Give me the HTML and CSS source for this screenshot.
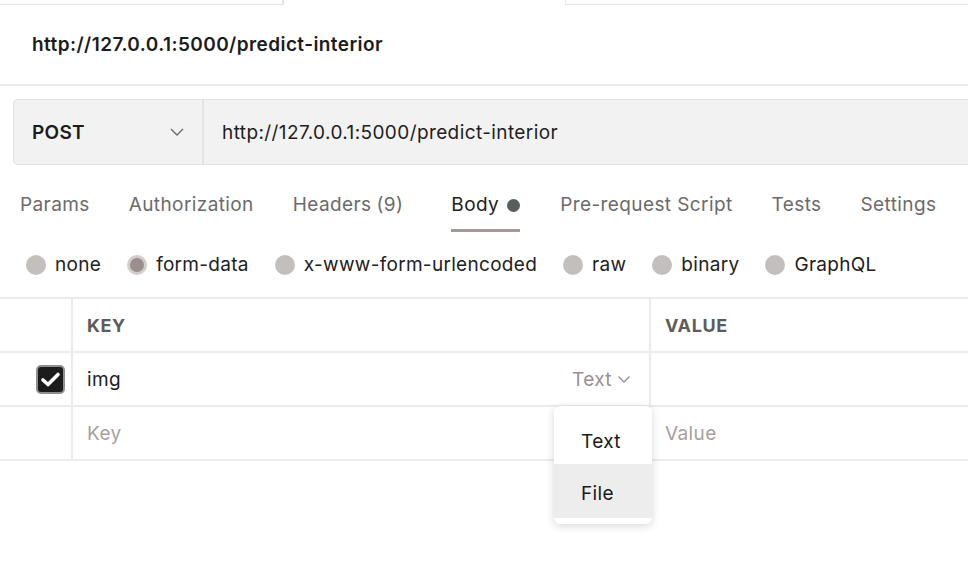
FILE: index.html
```html
<!DOCTYPE html>
<html>
<head>
<meta charset="utf-8">
<link rel="stylesheet" href="styles.css">
</head>
<body>
<div class="app">
  <div class="tabstrip">
    <div class="strip-left"></div>
    <div class="strip-active"></div>
    <div class="strip-right"></div>
  </div>
  <div class="title-bar">
    <span class="title">http://127.0.0.1:5000/predict-interior</span>
  </div>
  <div class="request-bar">
    <div class="method">
      <span class="method-name">POST</span>
      <svg class="chev" width="16" height="10" viewBox="0 0 16 10"><path d="M2 2 L8 8 L14 2" fill="none" stroke="#6b6b6b" stroke-width="1.4"/></svg>
    </div>
    <div class="url">http://127.0.0.1:5000/predict-interior</div>
  </div>
  <div class="tabs">
    <div class="tab">Params</div>
    <div class="tab">Authorization</div>
    <div class="tab headers">Headers <span class="count">(9)</span></div>
    <div class="tab active">Body <span class="dot"></span></div>
    <div class="tab">Pre-request Script</div>
    <div class="tab">Tests</div>
    <div class="tab">Settings</div>
  </div>
  <div class="radios">
    <label class="radio"><span class="circle"></span>none</label>
    <label class="radio"><span class="circle selected"></span>form-data</label>
    <label class="radio"><span class="circle"></span>x-www-form-urlencoded</label>
    <label class="radio"><span class="circle"></span>raw</label>
    <label class="radio"><span class="circle"></span>binary</label>
    <label class="radio"><span class="circle"></span>GraphQL</label>
  </div>
  <div class="table">
    <div class="row head">
      <div class="cell check"></div>
      <div class="cell key">KEY</div>
      <div class="cell value">VALUE</div>
    </div>
    <div class="row">
      <div class="cell check">
        <span class="checkbox"><svg width="21" height="17" viewBox="0 0 21 17"><path d="M3 9 L8 13.5 L18 3.5" fill="none" stroke="#fff" stroke-width="3.6" stroke-linecap="round" stroke-linejoin="round"/></svg></span>
      </div>
      <div class="cell key">
        <span class="key-text">img</span>
        <span class="type">Text <svg width="14" height="9" viewBox="0 0 14 9"><path d="M1.5 1.5 L7 7 L12.5 1.5" fill="none" stroke="#9a9090" stroke-width="1.3"/></svg></span>
      </div>
      <div class="cell value"></div>
    </div>
    <div class="row">
      <div class="cell check"></div>
      <div class="cell key"><span class="placeholder">Key</span></div>
      <div class="cell value"><span class="placeholder">Value</span></div>
      <div class="menu">
        <div class="menu-item first">Text</div>
        <div class="menu-item hover">File</div>
      </div>
    </div>
  </div>
</div>
</body>
</html>
```
FILE: styles.css
```css
* { box-sizing: border-box; }
html, body { margin: 0; padding: 0; background: #fff; }
body {
  font-family: Inter, "Noto Sans", "Liberation Sans", sans-serif;
  color: #212121;
  width: 968px;
  height: 565px;
  overflow: hidden;
  letter-spacing: 0.4px;
}
.tabstrip { display: flex; height: 5px; }
.strip-left { width: 284px; border-bottom: 1px solid #e4e4e4; border-right: 2px solid #e4e4e4; }
.strip-active { width: 281px; }
.strip-right { flex: 1; border-bottom: 1px solid #e4e4e4; border-left: 1px solid #ececec; }

.title-bar {
  height: 81px;
  display: flex;
  align-items: center;
  padding-left: 32px;
  border-bottom: 2px solid #ebebeb;
}
.title { font-size: 19px; font-weight: 600; color: #1c1c1c; letter-spacing: 0.42px; }

.request-bar {
  margin: 13px 0 0 13px;
  height: 66px;
  display: flex;
  background: #f2f2f2;
  border: 1px solid #e2e2e2;
  border-right: none;
  border-radius: 5px 0 0 5px;
}
.method {
  width: 190px;
  display: flex;
  align-items: center;
  justify-content: space-between;
  padding: 0 17px 0 18px;
  border-right: 2px solid #e4e4e4;
}
.method-name { font-size: 19px; font-weight: 600; color: #1c1c1c; letter-spacing: 0.3px; }
.url { display: flex; align-items: center; padding-left: 18px; font-size: 19px; color: #212121; }

.tabs {
  display: flex;
  padding: 28px 0 0 20px;
  height: 67px;
  white-space: nowrap;
  overflow: hidden;
}
.tab {
  font-size: 19px;
  color: #6b6b6b;
  line-height: 24px;
  margin-right: 39px;
  height: 39px;
  display: flex;
  align-items: flex-start;
  flex-shrink: 0;
}
.tab.headers { margin-right: 48px; }
.tab .count { margin-left: 5px; }
.tab.active { color: #212121; border-bottom: 3px solid #a29a96; margin-right: 40px; }
.dot { width: 13px; height: 13px; border-radius: 50%; background: #5a5e5a; margin: 6px 0 0 8px; display: inline-block; }

.radios {
  display: flex;
  align-items: center;
  padding: 0 0 0 26px;
  height: 65px;
  white-space: nowrap;
}
.radio {
  display: flex;
  align-items: center;
  font-size: 19px;
  color: #212121;
  margin-right: 26px;
  line-height: 24px;
  letter-spacing: 0.3px;
}
.circle {
  width: 20px;
  height: 20px;
  border-radius: 50%;
  background: #c3bfbd;
  margin-right: 9px;
  display: inline-block;
}
.circle.selected { background: #9a8f8c; border: 3px solid #d3cecc; }

.table { border-top: 2px solid #ebebeb; }
.row { display: flex; height: 54px; border-bottom: 2px solid #ebebeb; position: relative; }
.cell { display: flex; align-items: center; }
.cell.check { width: 73px; border-right: 2px solid #ebebeb; justify-content: flex-end; padding-right: 6px; }
.cell.key { width: 578px; border-right: 2px solid #ebebeb; padding-left: 14px; padding-right: 18px; font-size: 19px; }
.cell.value { flex: 1; padding-left: 14px; font-size: 19px; }
.head .cell.key, .head .cell.value { font-size: 18px; font-weight: 700; color: #5c5c5c; letter-spacing: 0.6px; }
.key-text { flex: 1; color: #1e1e1e; }
.type { color: #9a9090; display: flex; align-items: center; gap: 5px; }
.placeholder { color: #a8a0a0; }
.checkbox {
  width: 29px;
  height: 29px;
  border-radius: 5px;
  background: #1c1c1c;
  border: 2px solid #8f8f8f;
  display: flex;
  align-items: center;
  justify-content: center;
}

.menu {
  position: absolute;
  left: 554px;
  top: -1px;
  width: 98px;
  background: #fff;
  border-radius: 6px;
  box-shadow: 0 2px 8px rgba(0,0,0,0.16);
  overflow: hidden;
  z-index: 5;
  padding: 8px 0 6px;
}
.menu-item {
  height: 50px;
  display: flex;
  align-items: center;
  padding-left: 27px;
  padding-top: 4px;
  font-size: 19px;
  color: #1a1a1a;
}
.menu-item.hover { background: #ededed; height: 54px; }
```
